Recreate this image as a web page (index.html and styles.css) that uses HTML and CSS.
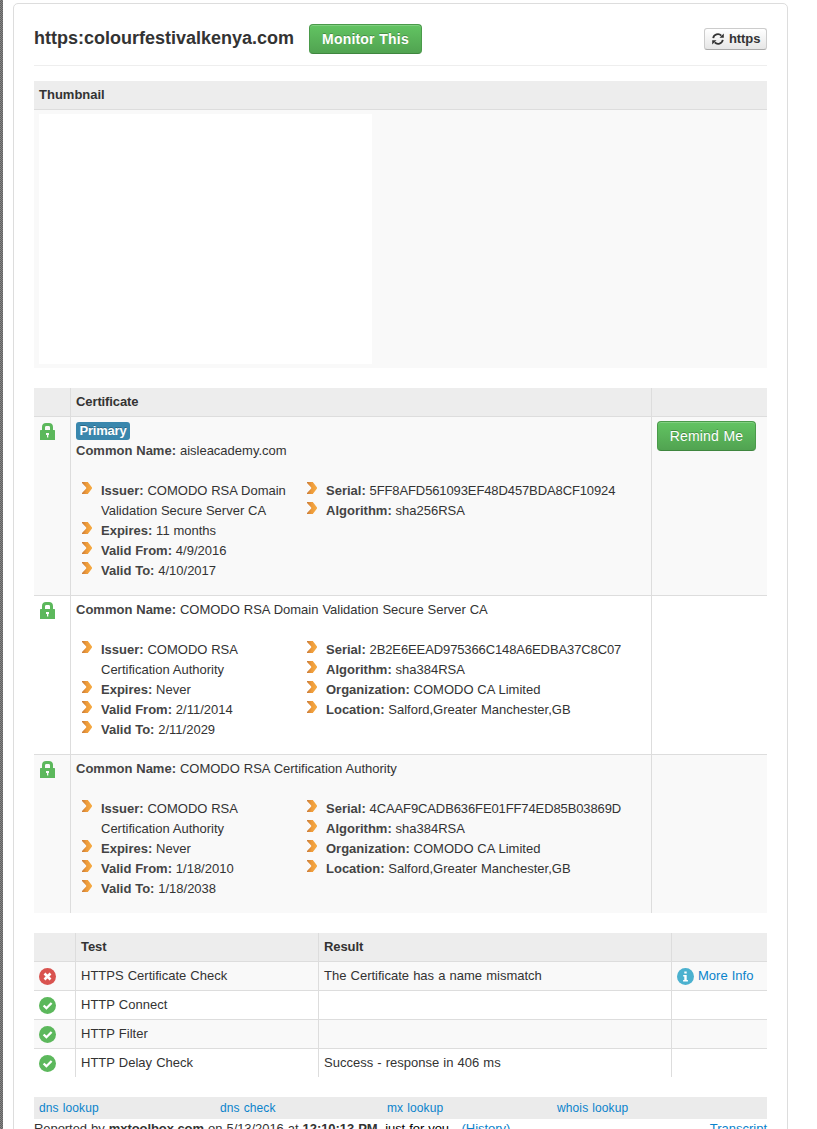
FILE: index.html
```
<!DOCTYPE html>
<html lang="en">
<head>
<meta charset="utf-8">
<title>https:colourfestivalkenya.com</title>
<link rel="stylesheet" href="styles.css">
</head>
<body>
<svg class="defs" width="0" height="0">
  <defs>
    <symbol id="lock" viewBox="0 0 15 17"><path fill="#5cb85c" fill-rule="evenodd" d="M2 8V4C2 1.500 3.500 0 6 0H9C11.500 0 13 1.500 13 4V7H14.500L15 7.500V17H0V7.500L.5 7H2zM5 7h5V4.500C10 3.500 9.500 3 8.500 3H6.500C5.500 3 5 3.500 5 4.500zM6 10v2h1v2.500h1.300V12H9v-2z"/></symbol>
    <symbol id="ok" viewBox="0 0 17 17"><circle cx="8.500" cy="8.500" r="8.500" fill="#5cb85c"/><path d="M4.600 8.500l2.800 2.700 5.200-5.200" fill="none" stroke="#fff" stroke-width="2.300"/></symbol>
    <symbol id="bad" viewBox="0 0 17 17"><circle cx="8.500" cy="8.500" r="8.500" fill="#d9534f"/><path d="M5.500 5.500l6 6m0-6l-6 6" fill="none" stroke="#fff" stroke-width="2.600"/></symbol>
    <symbol id="info" viewBox="0 0 17 17"><circle cx="8.500" cy="8.500" r="8.500" fill="#4bb1cf"/><path d="M7.300 3.500h2.400v2H7.300zM6.200 7h3.500v5h1.200v1.500H6.100V12h1.200V8.400H6.200z" fill="#fff"/></symbol>
  </defs>
</svg>
<div class="edge"></div>
<main class="panel">
  <header class="head">
    <h1>https:colourfestivalkenya.com</h1>
    <a class="btn monitor">Monitor This</a>
    <a class="tool"><svg width="12" height="12" viewBox="0 0 12 12"><path d="M1.200 5.100A4.800 4.800 0 0 1 9.300 2.600M10.800 6.900A4.800 4.800 0 0 1 2.700 9.400" fill="none" stroke="#333" stroke-width="1.800"/><path d="M11.800.4v4.300H7.500zM.2 11.600V7.300h4.300z" fill="#333"/></svg><span>https</span></a>
  </header>

  <section class="thumb">
    <div class="bar">Thumbnail</div>
    <div class="preview"><div class="shot"></div></div>
  </section>

  <section class="certs">
    <div class="row top"><div></div><div>Certificate</div><div></div></div>
    <div class="row odd">
      <div><svg class="lock"><use href="#lock"/></svg></div>
      <div>
        <div class="line"><span class="badge">Primary</span></div>
        <div class="line"><b>Common Name:</b> aisleacademy.com</div>
        <div class="lists">
          <ul><li><b>Issuer:</b> COMODO RSA Domain<br>Validation Secure Server CA</li><li><b>Expires:</b> 11 months</li><li><b>Valid From:</b> 4/9/2016</li><li><b>Valid To:</b> 4/10/2017</li></ul>
          <ul><li><b>Serial:</b> <span class="serial">5FF8AFD561093EF48D457BDA8CF10924</span></li><li><b>Algorithm:</b> sha256RSA</li></ul>
        </div>
      </div>
      <div><a class="btn remind">Remind Me</a></div>
    </div>
    <div class="row">
      <div><svg class="lock"><use href="#lock"/></svg></div>
      <div>
        <div class="line"><b>Common Name:</b> COMODO RSA Domain Validation Secure Server CA</div>
        <div class="lists">
          <ul><li><b>Issuer:</b> COMODO RSA<br>Certification Authority</li><li><b>Expires:</b> Never</li><li><b>Valid From:</b> 2/11/2014</li><li><b>Valid To:</b> 2/11/2029</li></ul>
          <ul><li><b>Serial:</b> <span class="serial">2B2E6EEAD975366C148A6EDBA37C8C07</span></li><li><b>Algorithm:</b> sha384RSA</li><li><b>Organization:</b> COMODO CA Limited</li><li><b>Location:</b> Salford,Greater Manchester,GB</li></ul>
        </div>
      </div>
      <div></div>
    </div>
    <div class="row odd">
      <div><svg class="lock"><use href="#lock"/></svg></div>
      <div>
        <div class="line"><b>Common Name:</b> COMODO RSA Certification Authority</div>
        <div class="lists">
          <ul><li><b>Issuer:</b> COMODO RSA<br>Certification Authority</li><li><b>Expires:</b> Never</li><li><b>Valid From:</b> 1/18/2010</li><li><b>Valid To:</b> 1/18/2038</li></ul>
          <ul><li><b>Serial:</b> <span class="serial">4CAAF9CADB636FE01FF74ED85B03869D</span></li><li><b>Algorithm:</b> sha384RSA</li><li><b>Organization:</b> COMODO CA Limited</li><li><b>Location:</b> Salford,Greater Manchester,GB</li></ul>
        </div>
      </div>
      <div></div>
    </div>
  </section>

  <section class="tests">
    <div class="row top"><div></div><div>Test</div><div>Result</div><div></div></div>
    <div class="row odd"><div><svg class="dot"><use href="#bad"/></svg></div><div>HTTPS Certificate Check</div><div>The Certificate has a name mismatch</div><div class="more"><svg class="dot"><use href="#info"/></svg><a>More Info</a></div></div>
    <div class="row"><div><svg class="dot"><use href="#ok"/></svg></div><div>HTTP Connect</div><div></div><div></div></div>
    <div class="row odd"><div><svg class="dot"><use href="#ok"/></svg></div><div>HTTP Filter</div><div></div><div></div></div>
    <div class="row"><div><svg class="dot"><use href="#ok"/></svg></div><div>HTTP Delay Check</div><div>Success - response in 406 ms</div><div></div></div>
  </section>

  <nav class="links"><a>dns lookup</a><a>dns check</a><a>mx lookup</a><a>whois lookup</a></nav>
  <footer class="foot">
    <span>Reported by <b>mxtoolbox.com</b> on 5/13/2016 at <b>12:10:13 PM</b>,</span>
    <span class="you">just for you.</span>
    <a>(History)</a>
    <a class="transcript">Transcript</a>
  </footer>
</main>
</body>
</html>
```
FILE: styles.css
```
* { box-sizing: border-box; }
html { height: 100%; overflow: hidden; }
body { margin: 0; height: 1129px; overflow: hidden; display: flex; align-items: flex-start; background: #fff; color: #333; font: 13px/20px "Liberation Sans", Arial, sans-serif; word-spacing: .5px; }
.defs { position: absolute; }
.edge { flex: none; width: 3px; height: 1129px; background: repeating-conic-gradient(#626262 0 25%, #868686 0 50%) 0 0 / 2px 2px; }
.panel { flex: none; width: 775px; height: 1160px; margin: 3px 0 0 10px; padding: 0 20px; border: 1px solid #ddd; border-radius: 5px; }
a { color: #0a83cb; }

.head { display: flex; align-items: flex-start; height: 62px; padding-top: 20px; border-bottom: 1px solid #eee; }
h1 { width: 275px; margin: 2px 0 0; font-size: 18px; line-height: 24px; white-space: nowrap; }
.btn { display: block; height: 30px; border: 1px solid #4a9a4a; border-bottom-color: #3f863f; border-radius: 4px; background: linear-gradient(#62c462, #51a351); box-shadow: inset 0 1px 0 rgba(255,255,255,.2); color: #fff; font-size: 14px; line-height: 28px; text-align: center; text-shadow: 0 -1px 0 rgba(0,0,0,.25); white-space: nowrap; }
.monitor { width: 113px; font-weight: bold; letter-spacing: .2px; }
.remind { width: 99px; letter-spacing: .15px; }
.tool { display: flex; align-items: center; width: 63px; height: 22px; margin: 4px 0 0 auto; padding-left: 7px; gap: 5px; border: 1px solid #ccc; border-bottom-color: #aaa; border-radius: 3px; background: linear-gradient(#fff, #e6e6e6); color: #333; font-weight: bold; letter-spacing: -.1px; }

.bar { height: 28px; padding: 4px 5px; background: #ededed; font-weight: bold; }
.thumb { margin-top: 15px; }
.preview { height: 259px; padding: 4px 5px; border-top: 1px solid #ddd; background: #f9f9f9; }
.shot { width: 333px; height: 250px; background: #fff; }

.certs, .tests { margin-top: 20px; }
.row { display: grid; border-top: 1px solid #ddd; }
.certs .row { grid-template-columns: 36px 581px 116px; }
.tests .row { grid-template-columns: 41px 243px 353px 96px; }
.row > div { min-height: 28px; padding: 4px 5px; border-left: 1px solid #ddd; }
.row > div:first-child { border-left: 0; }
.row.top { border-top: 0; background: #ededed; font-weight: bold; }
.row.top > div { letter-spacing: -.1px; }
.row.odd { background: #f9f9f9; }
.lock { display: block; width: 15px; height: 17px; margin: 2px 0 0 1px; }
.dot { display: block; flex: none; width: 17px; height: 17px; margin-top: 2px; }
.more { display: flex; gap: 4px; }
.line { height: 20px; white-space: nowrap; word-spacing: .3px; }
.badge { display: inline-block; width: 54px; height: 18px; margin-top: 1px; border-radius: 3px; background: #3a87ad; color: #fff; font-weight: bold; line-height: 18px; text-align: center; text-shadow: 0 -1px 0 rgba(0,0,0,.25); vertical-align: top; letter-spacing: -.2px; }
.line b, li b { color: #444; }
.lists { display: grid; grid-template-columns: 225px 1fr; margin: 20px 0 10px; min-height: 100px; padding-left: 6px; word-spacing: .2px; }
ul { margin: 0; padding: 0; list-style: none; }
li { padding-left: 19px; white-space: nowrap; position: relative; }
li::before { content: ""; position: absolute; left: 0; top: 1px; width: 10px; height: 12px; background: linear-gradient(90deg, #c87a38, #ee9b3a 45%, #f6ac45); clip-path: polygon(0 0, 58% 0, 100% 45%, 100% 55%, 58% 100%, 0 100%, 0 92%, 42% 55%, 42% 45%, 0 8%); }
.serial { letter-spacing: -.11px; }

.links { display: grid; grid-template-columns: 181px 167px 170px 1fr; height: 22px; margin-top: 20px; padding-left: 5px; background: #ebebeb; font-size: 12px; line-height: 22px; letter-spacing: .12px; }
.foot { display: flex; line-height: 19px; white-space: nowrap; font-size: 13px; letter-spacing: -.06px; }
.foot .you { margin-left: 4px; color: #000; }
.foot .you + a { margin-left: 9px; letter-spacing: -.05px; }
.transcript { margin-left: auto; letter-spacing: 0; }
```
